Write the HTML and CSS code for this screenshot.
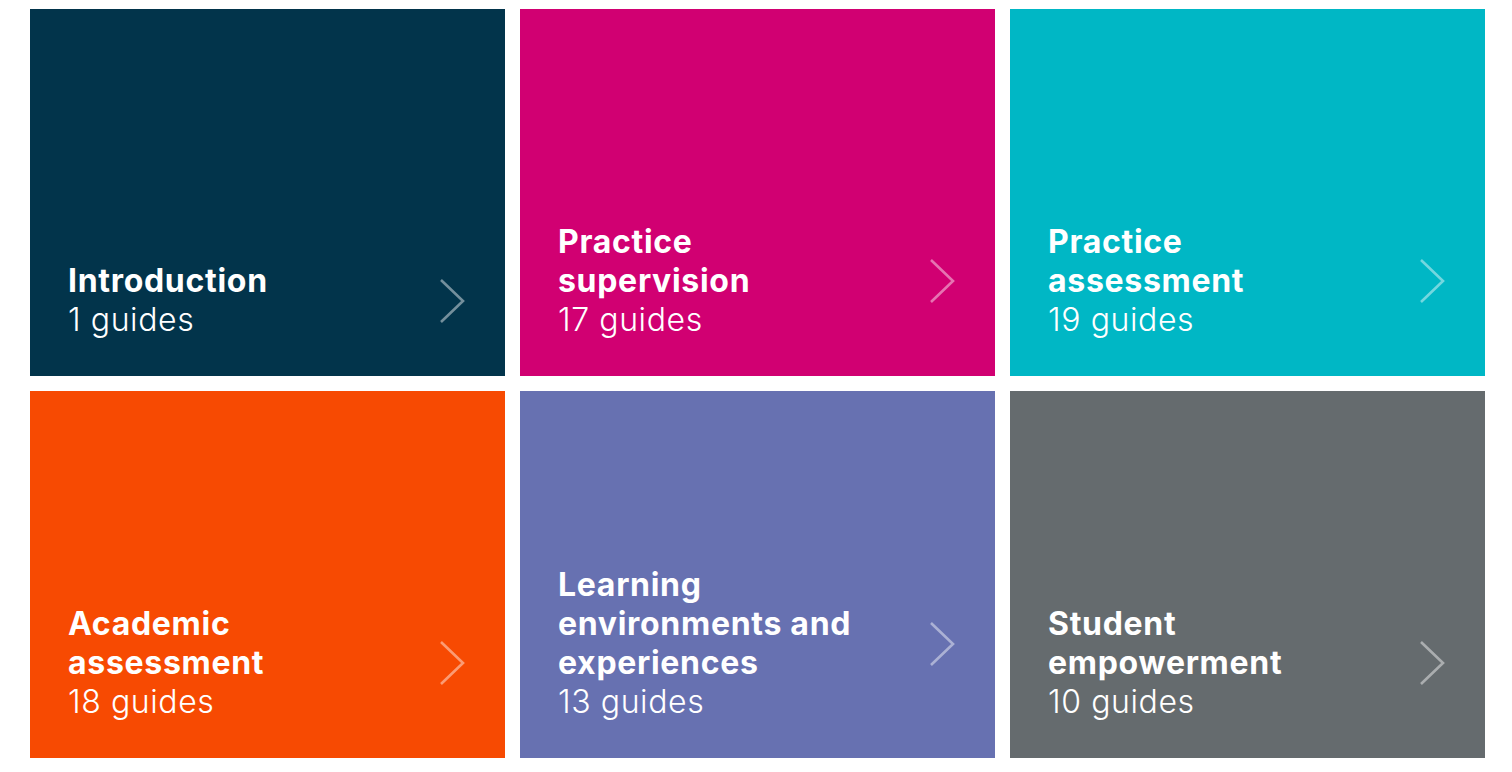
FILE: index.html
```html
<!DOCTYPE html>
<html lang="en">
<head>
<meta charset="utf-8">
<title>Guides</title>
<link rel="stylesheet" href="styles.css">
</head>
<body>
<main class="grid">
  <a class="tile navy" href="#">
    <div class="row">
      <div class="text"><h2 class="title">Introduction</h2><p class="count">1 guides</p></div>
      <svg class="chev" viewBox="0 0 26 46" width="26" height="46"><polyline points="2,2 24,23 2,44"/></svg>
    </div>
  </a>
  <a class="tile magenta" href="#">
    <div class="row">
      <div class="text"><h2 class="title">Practice<br>supervision</h2><p class="count">17 guides</p></div>
      <svg class="chev" viewBox="0 0 26 46" width="26" height="46"><polyline points="2,2 24,23 2,44"/></svg>
    </div>
  </a>
  <a class="tile teal" href="#">
    <div class="row">
      <div class="text"><h2 class="title">Practice<br>assessment</h2><p class="count">19 guides</p></div>
      <svg class="chev" viewBox="0 0 26 46" width="26" height="46"><polyline points="2,2 24,23 2,44"/></svg>
    </div>
  </a>
  <a class="tile orange" href="#">
    <div class="row">
      <div class="text"><h2 class="title">Academic<br>assessment</h2><p class="count">18 guides</p></div>
      <svg class="chev" viewBox="0 0 26 46" width="26" height="46"><polyline points="2,2 24,23 2,44"/></svg>
    </div>
  </a>
  <a class="tile purple" href="#">
    <div class="row">
      <div class="text"><h2 class="title">Learning<br>environments and<br>experiences</h2><p class="count">13 guides</p></div>
      <svg class="chev" viewBox="0 0 26 46" width="26" height="46"><polyline points="2,2 24,23 2,44"/></svg>
    </div>
  </a>
  <a class="tile grey" href="#">
    <div class="row">
      <div class="text"><h2 class="title">Student<br>empowerment</h2><p class="count">10 guides</p></div>
      <svg class="chev" viewBox="0 0 26 46" width="26" height="46"><polyline points="2,2 24,23 2,44"/></svg>
    </div>
  </a>
</main>
</body>
</html>
```
FILE: styles.css
```css
html, body {
  margin: 0;
  padding: 0;
  background: #ffffff;
}
body {
  font-family: Inter, "Noto Sans", sans-serif;
  color: #ffffff;
}
.grid {
  display: grid;
  grid-template-columns: repeat(3, 475px);
  grid-template-rows: repeat(2, 367px);
  gap: 15px;
  padding: 9px 0 0 30px;
}
.tile {
  display: flex;
  align-items: flex-end;
  padding: 0 40px 36px 38px;
  text-decoration: none;
  color: #ffffff;
}
.row {
  display: flex;
  align-items: center;
  justify-content: space-between;
  width: 100%;
}
.text {
  display: flex;
  flex-direction: column;
}
.title {
  margin: 0;
  font-size: 32px;
  font-weight: 700;
  line-height: 39px;
  letter-spacing: 0.7px;
}
.count {
  margin: 0;
  font-size: 32px;
  font-weight: 300;
  line-height: 40px;
  letter-spacing: 0.6px;
}
.chev {
  flex: none;
}
.chev polyline {
  fill: none;
  stroke: rgba(255, 255, 255, 0.45);
  stroke-width: 2.6;
}
.navy { background: #02344b; }
.magenta { background: #d10072; }
.teal { background: #00b7c5; }
.orange { background: #f74a02; }
.purple { background: #6771b1; }
.grey { background: #656b6e; }
```
